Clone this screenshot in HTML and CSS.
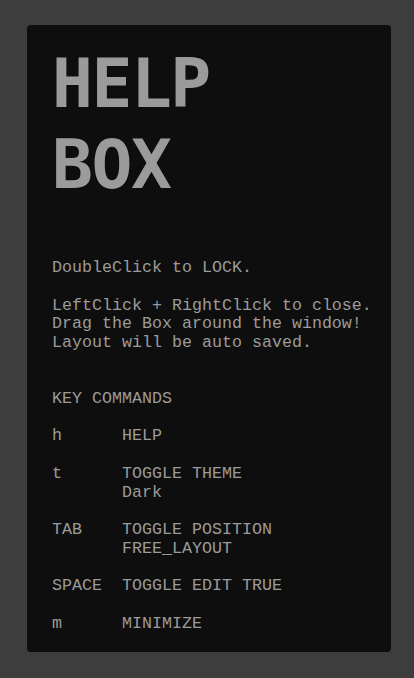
FILE: index.html
```html
<!DOCTYPE html>
<html>
<head>
<meta charset="utf-8">
<link rel="stylesheet" href="styles.css">
</head>
<body>
<div class="box">
  <h1 class="title">HELP<br>BOX</h1>
  <div class="text">
    <p class="para">DoubleClick to LOCK.</p>
    <p class="para">LeftClick + RightClick to close.<br>Drag the Box around the window!<br>Layout will be auto saved.</p>
  </div>
  <div class="keys">
    <div class="heading">KEY COMMANDS</div>
    <div class="row"><span class="key">h</span><span class="desc">HELP</span></div>
    <div class="row"><span class="key">t</span><span class="desc">TOGGLE THEME<br>Dark</span></div>
    <div class="row"><span class="key">TAB</span><span class="desc">TOGGLE POSITION<br>FREE_LAYOUT</span></div>
    <div class="row"><span class="key">SPACE</span><span class="desc">TOGGLE EDIT TRUE</span></div>
    <div class="row"><span class="key">m</span><span class="desc">MINIMIZE</span></div>
  </div>
</div>
</body>
</html>
```

FILE: styles.css
```css
html, body {
  margin: 0;
  padding: 0;
  background: #3d3d3d;
}
body {
  padding: 25px 23px 26px 27px;
  height: 678px;
  box-sizing: border-box;
}
.box {
  background: #0e0e0e;
  border-radius: 4px;
  height: 100%;
  box-sizing: border-box;
  padding: 18px 15px 20px 25px;
  color: #9b9b9b;
  font-family: "Liberation Mono", monospace;
  font-size: 16.67px;
  line-height: 18.8px;
  white-space: nowrap;
}
.title {
  margin: 0;
  font-family: "DejaVu Sans Mono", monospace;
  font-weight: bold;
  font-size: 68px;
  line-height: 81px;
  letter-spacing: -1.5px;
  color: #9b9b9b;
}
.text {
  margin-top: 54px;
}
.para {
  margin: 0 0 18.8px 0;
}
.keys {
  margin-top: 37px;
  line-height: 18.75px;
}
.heading {
  margin-bottom: 18.75px;
}
.row {
  display: flex;
  margin-bottom: 18.75px;
}
.row:last-child {
  margin-bottom: 0;
}
.key {
  width: 70px;
  flex: none;
}
```
